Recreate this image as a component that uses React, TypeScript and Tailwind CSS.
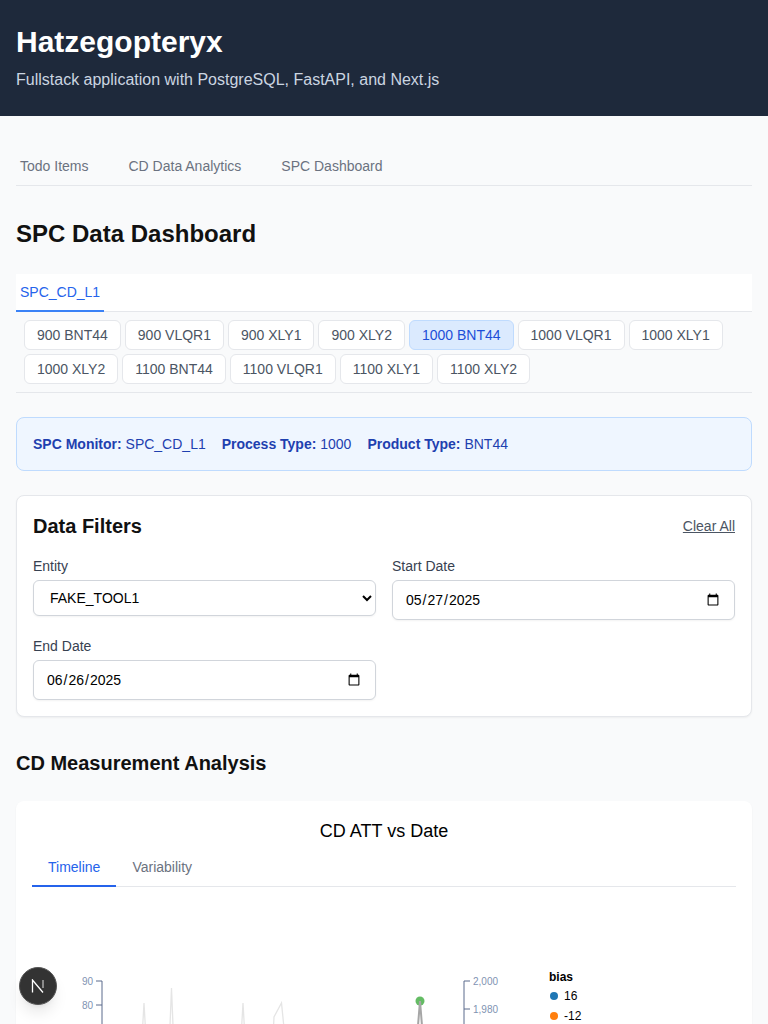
import type { ReactNode } from 'react'

const row1 = ['900 BNT44', '900 VLQR1', '900 XLY1', '900 XLY2', '1000 BNT44', '1000 VLQR1', '1000 XLY1']
const row2 = ['1000 XLY2', '1100 BNT44', '1100 VLQR1', '1100 XLY1', '1100 XLY2']

const Chip = ({ label }: { label: string }) => {
  const active = label === '1000 BNT44'
  return (
    <button
      className={`h-[30px] px-3 rounded-md border text-sm leading-5 ${
        active ? 'bg-[#dbeafe] border-[#bfdbfe] text-[#1d4ed8]' : 'bg-white border-[#e5e7eb] text-[#4b5563]'
      }`}
    >
      {label}
    </button>
  )
}

const Field = ({ label, children }: { label: string; children: ReactNode }) => (
  <div>
    <label className="block text-sm leading-5 text-[#374151] mb-1">{label}</label>
    {children}
  </div>
)

const DateField = ({ value }: { value: string }) => (
  <input
    type="date"
    defaultValue={value}
    className="block w-full h-10 px-3 bg-white border border-[#d1d5db] rounded-md shadow-[0_1px_2px_rgba(0,0,0,0.05)] text-sm text-black"
  />
)

const Chart = () => (
  <svg className="block mt-[13px] w-[704px] h-[138px]" viewBox="0 0 704 138">
    <g stroke="#e5e5e5" strokeWidth="1.3" fill="none">
      <path d="M110 138 L112 103 L114 138" />
      <path d="M137.5 138 L139.5 88 L141.5 138" />
      <path d="M209 138 L211 103 L213 138" />
      <path d="M241 138 L242 117 L249.5 103 L253 138" />
    </g>
    <circle cx="388" cy="101" r="4.5" fill="#5cb85c" fillOpacity="0.95" />
    <path d="M385 138 L388 101 L391 138" stroke="#a6a6a6" strokeWidth="2" fill="none" />
    <g stroke="#5b6b8c" fill="none">
      <path d="M64 81 H70 V138 M64 105 H70" />
      <path d="M438 81 H432 V138 M438 109 H432" />
    </g>
    <g fontSize="10" fill="#7f93b2" fontFamily="Liberation Sans, sans-serif">
      <text x="61" y="85" textAnchor="end">90</text>
      <text x="61" y="109" textAnchor="end">80</text>
      <text x="441" y="85">2,000</text>
      <text x="441" y="113">1,980</text>
    </g>
    <text x="517" y="81" fontSize="12" fontWeight="700" fill="#000" fontFamily="Liberation Sans, sans-serif">bias</text>
    <circle cx="522" cy="96" r="4" fill="#1f77b4" />
    <text x="532" y="100" fontSize="12" fill="#000" fontFamily="Liberation Sans, sans-serif">16</text>
    <circle cx="522" cy="116" r="4" fill="#ff7f0e" />
    <text x="532" y="120" fontSize="12" fill="#000" fontFamily="Liberation Sans, sans-serif">-12</text>
  </svg>
)

export default function App() {
  return (
    <div className="h-[1024px] overflow-hidden bg-[#f9fafb] font-['Liberation_Sans',sans-serif]">
      <header className="h-[116px] bg-[#1e293b] px-4 pt-6">
        <h1 className="text-3xl leading-9 font-bold text-white">Hatzegopteryx</h1>
        <p className="mt-2 text-base leading-6 text-[#cbd5e1]">Fullstack application with PostgreSQL, FastAPI, and Next.js</p>
      </header>

      <main className="px-4 pt-8">
        <nav className="flex gap-8 h-[38px] border-b border-[#e5e7eb]">
          <span className="px-1 pt-2 text-sm leading-5 text-[#6b7280]">Todo Items</span>
          <span className="px-1 pt-2 text-sm leading-5 text-[#6b7280]">CD Data Analytics</span>
          <span className="px-1 pt-2 text-sm leading-5 text-[#6b7280]">SPC Dashboard</span>
        </nav>

        <h2 className="mt-8 text-2xl leading-8 font-bold text-[#111111]">SPC Data Dashboard</h2>

        <div className="mt-6 bg-white h-[38px] border-b border-[#e5e7eb]">
          <div className="inline-block h-[38px] px-1 pt-2 border-b-2 border-[#3b82f6] text-sm leading-5 text-[#2563eb]">SPC_CD_L1</div>
        </div>

        <div className="px-2 pt-2 pb-2 border-b border-[#e5e7eb]">
          <div className="flex gap-1">{row1.map(c => <Chip key={c} label={c} />)}</div>
          <div className="flex gap-1 mt-1">{row2.map(c => <Chip key={c} label={c} />)}</div>
        </div>

        <div className="mt-6 h-[54px] flex items-center gap-4 px-4 bg-[#eff6ff] border border-[#bfdbfe] rounded-lg text-sm text-[#1e40af]">
          <span><b>SPC Monitor:</b> SPC_CD_L1</span>
          <span><b>Process Type:</b> 1000</span>
          <span><b>Product Type:</b> BNT44</span>
        </div>

        <section className="mt-6 h-[222px] bg-white border border-[#e5e7eb] rounded-lg shadow-[0_1px_2px_rgba(0,0,0,0.05)] p-4">
          <div className="flex items-center justify-between">
            <h3 className="text-xl leading-7 font-bold text-[#111111]">Data Filters</h3>
            <button className="text-sm leading-5 text-[#4b5563] underline">Clear All</button>
          </div>
          <div className="mt-4 grid grid-cols-2 gap-x-4 gap-y-4 items-start">
            <Field label="Entity">
              <select className="block w-full h-9 px-3 bg-white border border-[#d1d5db] rounded-md shadow-[0_1px_2px_rgba(0,0,0,0.05)] text-sm text-black">
                <option>FAKE_TOOL1</option>
              </select>
            </Field>
            <Field label="Start Date"><DateField value="2025-05-27" /></Field>
            <Field label="End Date"><DateField value="2025-06-26" /></Field>
          </div>
        </section>

        <h3 className="mt-8 text-xl leading-7 font-bold text-[#111111]">CD Measurement Analysis</h3>

        <section className="mt-6 bg-white rounded-lg shadow-[0_1px_2px_rgba(0,0,0,0.05)] p-4">
          <p className="text-lg leading-7 text-center text-black">CD ATT vs Date</p>
          <div className="flex mt-2 h-[34px] border-b border-[#e5e7eb]">
            <span className="h-[34px] px-4 pt-1 border-b-2 border-[#2563eb] text-sm leading-5 text-[#2563eb]">Timeline</span>
            <span className="h-[34px] px-4 pt-1 text-sm leading-5 text-[#6b7280]">Variability</span>
          </div>
          <Chart />
        </section>
      </main>

      {/* dev tools badge */}
      <div className="fixed left-[19px] top-[967px] w-[38px] h-[38px] rounded-full bg-[#333333] border border-[#555555] shadow-lg flex items-center justify-center">
        <svg width="14" height="14" viewBox="0 0 14 14" fill="none" stroke="#ffffff" strokeWidth="1.3">
          <path d="M1.5 13.5 V1 L12 13.5" />
          <path d="M12 1 V9" stroke="#bbbbbb" />
        </svg>
      </div>
    </div>
  )
}
